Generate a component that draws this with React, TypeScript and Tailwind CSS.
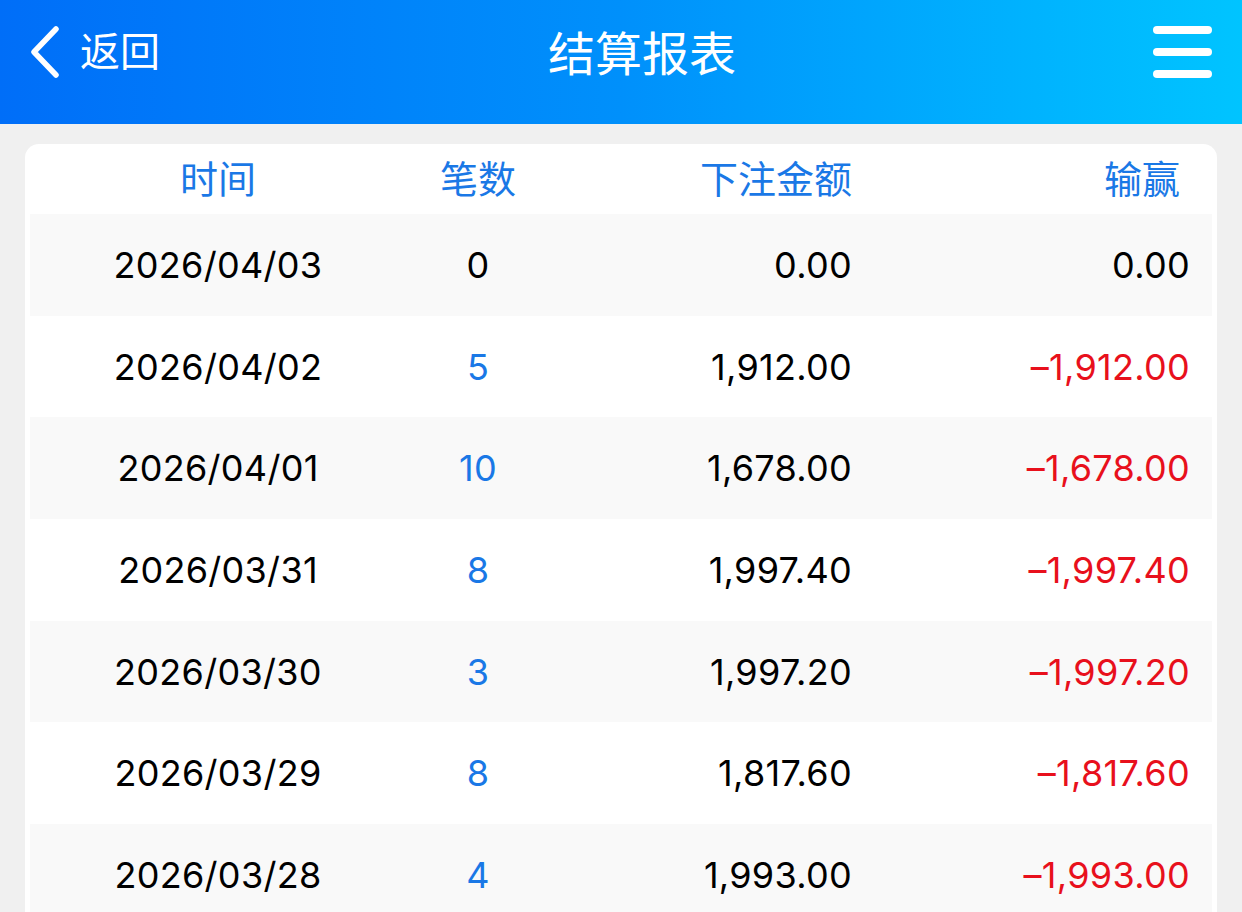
const rows = [
  { date: "2026/04/03", count: "0", bet: "0.00", win: "0.00" },
  { date: "2026/04/02", count: "5", bet: "1,912.00", win: "–1,912.00" },
  { date: "2026/04/01", count: "10", bet: "1,678.00", win: "–1,678.00" },
  { date: "2026/03/31", count: "8", bet: "1,997.40", win: "–1,997.40" },
  { date: "2026/03/30", count: "3", bet: "1,997.20", win: "–1,997.20" },
  { date: "2026/03/29", count: "8", bet: "1,817.60", win: "–1,817.60" },
  { date: "2026/03/28", count: "4", bet: "1,993.00", win: "–1,993.00" },
]

export default function App() {
  return (
    <div className="h-[912px] overflow-hidden bg-[#f0f0f0] font-['Inter','Noto_Sans_CJK_SC',sans-serif]">
      <header className="relative flex h-[124px] items-center bg-gradient-to-r from-[#006ef8] via-[#0090fb] to-[#00c4ff] pb-[20px] text-white">
        <div className="flex items-center gap-[20px] pl-[30px]">
          <svg width="30" height="52" viewBox="0 0 30 52" fill="none">
            <path d="M26 3 L4 26 L26 49" stroke="white" strokeWidth="5.5" strokeLinecap="round" strokeLinejoin="round" />
          </svg>
          <span className="text-[40px] leading-none">返回</span>
        </div>
        <h1 className="absolute left-[calc(50%+21px)] top-[30px] -translate-x-1/2 text-[47px] leading-none">结算报表</h1>
        <div className="ml-auto mr-[30px] flex flex-col gap-[14px]">
          <span className="block h-[8px] w-[59px] rounded-full bg-white" />
          <span className="block h-[8px] w-[59px] rounded-full bg-white" />
          <span className="block h-[8px] w-[59px] rounded-full bg-white" />
        </div>
      </header>

      <div className="mx-[25px] mt-[20px] rounded-[14px] bg-white px-[5px]">
        <div className="flex h-[70px] items-center text-[38px] text-[#1a78e6]">
          <div className="w-[376px] text-center">时间</div>
          <div className="w-[144px] text-center">笔数</div>
          <div className="w-[302px] text-right">下注金额</div>
          <div className="w-[328px] text-right">输赢</div>
        </div>
        {rows.map((r, i) => (
          <div
            key={r.date}
            className={`flex h-[101.7px] items-center text-[36px] tracking-[0.3px] ${i % 2 === 0 ? "bg-[#f9f9f9]" : "bg-white"}`}
          >
            <div className="w-[376px] text-center text-black">{r.date}</div>
            <div className={`w-[144px] text-center ${r.count === "0" ? "text-black" : "text-[#1a78e6]"}`}>{r.count}</div>
            <div className="w-[302px] text-right text-black">{r.bet}</div>
            <div className={`w-[338px] text-right ${r.win.startsWith("–") ? "text-[#e8101c]" : "text-black"}`}>{r.win}</div>
          </div>
        ))}
      </div>
    </div>
  )
}
